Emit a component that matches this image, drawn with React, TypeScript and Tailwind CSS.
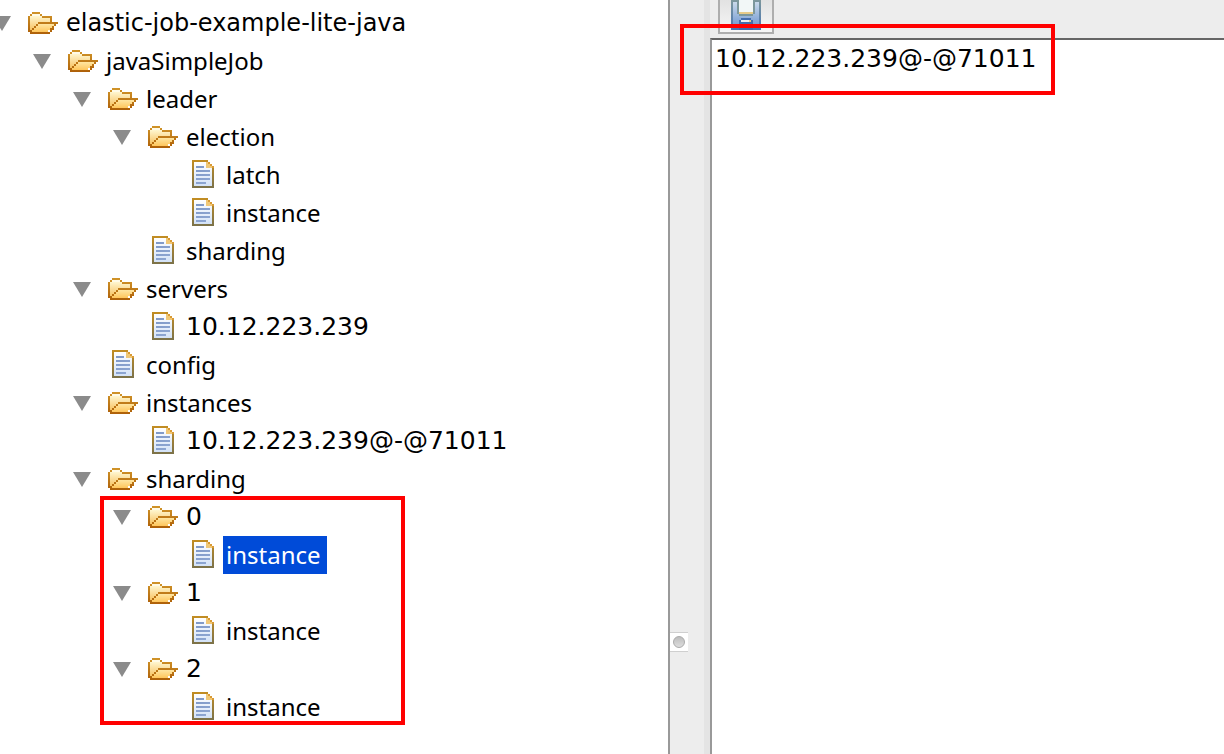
import { useState } from "react";

type TreeNode = { name: string; children?: TreeNode[]; outlined?: boolean };

const tree: TreeNode = {
  name: "elastic-job-example-lite-java",
  children: [
    {
      name: "javaSimpleJob",
      children: [
        {
          name: "leader",
          children: [
            { name: "election", children: [{ name: "latch" }, { name: "instance" }] },
            { name: "sharding" },
          ],
        },
        { name: "servers", children: [{ name: "10.12.223.239" }] },
        { name: "config" },
        { name: "instances", children: [{ name: "10.12.223.239@-@71011" }] },
        {
          name: "sharding",
          outlined: true,
          children: [
            { name: "0", children: [{ name: "instance" }] },
            { name: "1", children: [{ name: "instance" }] },
            { name: "2", children: [{ name: "instance" }] },
          ],
        },
      ],
    },
  ],
};

function FolderIcon() {
  return (
    <svg viewBox="0 0 16 16" className="size-8 shrink-0" shapeRendering="crispEdges" aria-hidden="true">
      <defs>
        <linearGradient id="folderBack" x1="0" y1="0" x2="0" y2="1">
          <stop offset="0" stopColor="#fff6cf" />
          <stop offset="1" stopColor="#f6bd55" />
        </linearGradient>
        <linearGradient id="folderFront" x1="0" y1="0" x2="0" y2="1">
          <stop offset="0" stopColor="#ffe6a2" />
          <stop offset="1" stopColor="#ffc65c" />
        </linearGradient>
        <linearGradient id="folderEdge" gradientUnits="userSpaceOnUse" x1="0" y1="1" x2="0" y2="11">
          <stop offset="0" stopColor="#cf9227" />
          <stop offset="1" stopColor="#ae6008" />
        </linearGradient>
      </defs>
      <g transform="translate(1 2.5)">
        <path d="M1 2h10v4H5v1H4v1H3v1H2v1H1z" fill="url(#folderBack)" />
        <path d="M2 1h4v1H2z" fill="#fffbe8" />
        <path d="M5 6h8v1h-1v1h-1v1h-1v1H2V9h1V8h1V7h1z" fill="url(#folderFront)" />
        <path
          d="M2 0h4v1H2zM1 1h1v1H1zM6 1h1v1H6zM0 2h1v8H0zM7 2h5v1H7zM11 3h1v2h-1zM5 5h10v1H5zM4 6h1v1H4zM13 6h1v1h-1zM3 7h1v1H3zM13 7h-1v1h1zM2 8h1v1H2zM11 8h2v1h-2zM1 9h1v1H1zM11 9h1v1h-1zM1 10h10v1H1z"
          fill="url(#folderEdge)"
        />
      </g>
    </svg>
  );
}

function FileIcon() {
  return (
    <svg viewBox="0 0 16 16" className="size-8 shrink-0" shapeRendering="crispEdges" aria-hidden="true">
      <defs>
        <linearGradient id="fileEdge" x1="0" y1="0" x2="0" y2="1">
          <stop offset="0" stopColor="#c38d22" />
          <stop offset="1" stopColor="#7b724a" />
        </linearGradient>
        <linearGradient id="filePaper" x1="0" y1="0" x2="0" y2="1">
          <stop offset="0" stopColor="#ffffff" />
          <stop offset="1" stopColor="#d3e2f7" />
        </linearGradient>
        <linearGradient id="fileLines" gradientUnits="userSpaceOnUse" x1="2" y1="3" x2="9" y2="12">
          <stop offset="0" stopColor="#7f98c6" />
          <stop offset="1" stopColor="#8fa8d4" />
        </linearGradient>
      </defs>
      <g transform="translate(3 0.5)">
        <path d="M0 0h8v1h1v1h1v1h1v11H0z" fill="url(#fileEdge)" />
        <path d="M1 1h6v3h3v9H1z" fill="url(#filePaper)" />
        <path d="M7 1h1v1h1v1h1v1H7z" fill="#f0c877" />
        <path d="M8 1h1v1H8zM9 2h1v1H9zM10 3h1v1h-1z" fill="#d99a35" />
        <path d="M2 3h4v1H2zM2 5h7v1H2zM2 7h7v1H2zM2 9h7v1H2zM2 11h5v1H2z" fill="url(#fileLines)" />
      </g>
    </svg>
  );
}

function SaveIcon() {
  return (
    <svg viewBox="0 0 30 30" className="h-[30px] w-[30px] shrink-0" shapeRendering="crispEdges" aria-hidden="true">
      <defs>
        <linearGradient id="disk" x1="0" y1="0" x2="0" y2="1">
          <stop offset="0" stopColor="#c9d9ea" />
          <stop offset="1" stopColor="#6d95cf" />
        </linearGradient>
        <linearGradient id="diskEdge" x1="0" y1="0" x2="0" y2="1">
          <stop offset="0" stopColor="#7d979c" />
          <stop offset="1" stopColor="#4a76b4" />
        </linearGradient>
      </defs>
      <path d="M0 0h30v30H0z" fill="url(#diskEdge)" />
      <path d="M2 2h26v26H2z" fill="url(#disk)" />
      <path d="M6 0h18v14h-2v2H8v-2H6z" fill="#7c979b" />
      <path d="M8 0h14v12H8z" fill="#f2f7f7" />
      <path d="M8 12h14v2H8z" fill="#e6ca88" />
      <path d="M10 18h10v2h2v10H8V20h2z" fill="#426dad" />
      <path d="M10 20h8v2h-8z" fill="#e9eef5" />
      <path d="M18 20h2v2h-2z" fill="#e7cc8a" />
      <path d="M10 24h3v4h-3zM16 24h4v4h-4z" fill="#dce6f3" />
    </svg>
  );
}

type ItemProps = { node: TreeNode; path: string; selected: string; onSelect: (path: string) => void };

function labelFont(name: string) {
  if (/^\d/.test(name)) return "font-['DejaVu_Sans',sans-serif] text-[25px]";
  if (name.includes("-")) return "font-['DejaVu_Sans',sans-serif] text-2xl";
  return "font-['Noto_Sans',sans-serif] text-2xl";
}

function TreeItem({ node, path, selected, onSelect }: ItemProps) {
  const [open, setOpen] = useState(true);
  const active = selected === path;
  return (
    <li>
      <div className="flex h-[38px] items-center">
        {node.children ? (
          <button
            type="button"
            aria-label={`Toggle ${node.name}`}
            aria-expanded={open}
            onClick={() => setOpen(!open)}
            className="mr-[15px] w-[18px] shrink-0"
          >
            <svg viewBox="0 0 18 15" className={open ? "block h-[15px] w-[18px]" : "block h-[15px] w-[18px] -rotate-90"}>
              <path d="M0 0h18L9 15z" fill="#8b8b8b" />
            </svg>
          </button>
        ) : (
          <span className="mr-[15px] w-[18px] shrink-0" />
        )}
        {node.children ? <FolderIcon /> : <FileIcon />}
        <button
          type="button"
          onClick={() => onSelect(path)}
          className={`ml-[5px] h-[38px] pr-1.5 pl-[3px] whitespace-nowrap ${labelFont(node.name)} ${
            active ? "bg-[#004bd8] text-white" : "text-black"
          }`}
        >
          {node.name}
        </button>
      </div>
      {node.children && open && (
        <ul className="relative pl-10">
          {node.children.map((child, i) => (
            <TreeItem key={i} node={child} path={`${path}/${i}`} selected={selected} onSelect={onSelect} />
          ))}
          {node.outlined && (
            <li
              aria-hidden="true"
              className="pointer-events-none absolute -top-0.5 bottom-px left-[27px] w-[305px] border-4 border-[#ff0000]"
            />
          )}
        </ul>
      )}
    </li>
  );
}

export default function App() {
  const [selected, setSelected] = useState("r/0/4/0/0");
  const [data, setData] = useState("10.12.223.239@-@71011");
  return (
    <div className="grid min-h-screen grid-cols-[670fr_554fr] overflow-hidden bg-white">
      <nav aria-label="Nodes" className="overflow-hidden border-r-2 border-[#999999] pt-1">
        <ul className="-ml-[7px]">
          <TreeItem node={tree} path="r" selected={selected} onSelect={setSelected} />
        </ul>
      </nav>
      <div className="flex min-w-0 bg-[#ededed]">
        <div className="flex w-[34px] shrink-0 flex-col justify-end pb-[102px]">
          <div className="flex h-5 w-[18px] items-center justify-center border-y border-[#cfcfcf] bg-white">
            <span className="size-3 rounded-full border border-[#aaaaaa] bg-linear-to-b from-[#bdbdbd] to-[#dddddd]" />
          </div>
        </div>
        <div className="w-1.5 shrink-0 bg-[#e4e4e4]" />
        <main className="relative flex min-w-0 flex-1 flex-col">
          <div className="flex h-[38px] items-start pl-2">
            <button
              type="button"
              aria-label="Save"
              className="flex h-[34px] w-14 items-start justify-center overflow-hidden border-2 border-t-0 border-[#aeaeae] bg-linear-to-b from-[#e2e2e2] to-[#f6f6f6]"
            >
              <SaveIcon />
            </button>
          </div>
          <textarea
            aria-label="Node data"
            spellCheck={false}
            value={data}
            onChange={(e) => setData(e.target.value)}
            className="w-full flex-1 resize-none border-t-2 border-l-2 border-t-[#666666] border-l-[#999999] bg-white px-[3px] py-0.5 font-['DejaVu_Sans',sans-serif] text-[25px] leading-[34px] text-black outline-none"
          />
          <div
            aria-hidden="true"
            className="pointer-events-none absolute top-6 -left-[30px] h-[71px] w-[375px] border-4 border-[#ff0000]"
          />
        </main>
      </div>
    </div>
  );
}
